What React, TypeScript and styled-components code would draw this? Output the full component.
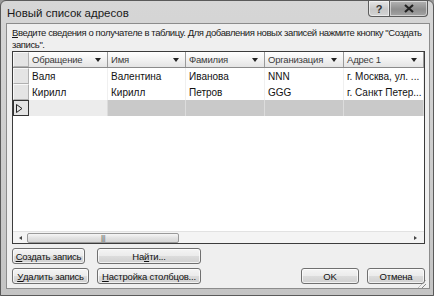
import React from 'react';
import styled, { createGlobalStyle } from 'styled-components';

const GlobalStyle = createGlobalStyle`
  html, body {
    margin: 0;
    padding: 0;
    width: 434px;
    height: 296px;
    overflow: hidden;
    background: #9a9a9a;
  }
  * {
    box-sizing: border-box;
  }
`;

const font = `"Liberation Sans", Arial, sans-serif`;

const Window = styled.div`
  width: 434px;
  height: 296px;
  display: flex;
  flex-direction: column;
  padding: 0 6px 6px 5px;
  background: linear-gradient(180deg, #d6d6d6 0%, #cfcfcf 40%, #c4c4c4 100%);
  border: 1px solid #5a5a5a;
  border-radius: 6px 6px 0 0;
  font-family: ${font};
  color: #111;
`;

const TitleBar = styled.div`
  height: 22px;
  display: flex;
  align-items: flex-start;
  justify-content: space-between;
  flex-shrink: 0;
`;

const Title = styled.div`
  font-size: 11.5px;
  padding: 6px 0 0 1px;
  color: #1a1a1a;
`;

const Controls = styled.div`
  display: flex;
  margin-right: -1px;
`;

const CtrlButton = styled.div<{ $w: number; $dark?: boolean }>`
  width: ${p => p.$w}px;
  height: 16px;
  display: flex;
  align-items: center;
  justify-content: center;
  border: 1px solid #5c5c5c;
  border-top: none;
  margin-left: -1px;
  background: ${p =>
    p.$dark
      ? 'linear-gradient(180deg, #b4b4b4 0%, #8e8e8e 55%, #a4a4a4 100%)'
      : 'linear-gradient(180deg, #e6e6e6 0%, #c8c8c8 55%, #d4d4d4 100%)'};
  border-radius: ${p => (p.$dark ? '0 0 4px 0' : '0 0 0 4px')};
  box-shadow: inset 0 0 0 1px rgba(255, 255, 255, 0.5);
  font-size: 11px;
  font-weight: bold;
  color: #333;
`;

const Client = styled.div`
  flex: 1;
  display: flex;
  flex-direction: column;
  background: #efefef;
  border: 1px solid #8c8c8c;
  padding: 3px 4px 0 5px;
`;

const Intro = styled.div`
  font-size: 9.5px;
  line-height: 11.5px;
  letter-spacing: -0.4px;
  color: #1a1a1a;
  height: 22px;
  white-space: pre;
  overflow: hidden;
`;

const U = styled.span`
  text-decoration: underline;
`;

const Grid = styled.div`
  margin-top: 2px;
  height: 193px;
  width: 413px;
  display: flex;
  flex-direction: column;
  background: #fff;
  border: 1px solid #3c3c3c;
`;

const Row = styled.div`
  display: grid;
  grid-template-columns: 16px 79px 78px 79px 79px 80px;
  height: 16px;
`;

const HeaderRow = styled(Row)`
  height: 16px;
  border-bottom: 1px solid #8a8a8a;
  background: linear-gradient(180deg, #ffffff 0%, #f2f2f2 50%, #e4e4e4 100%);
`;

const HeadCell = styled.div`
  display: flex;
  align-items: center;
  justify-content: space-between;
  padding: 0 6px 0 3px;
  font-size: 9.5px;
  letter-spacing: -0.2px;
  color: #3a3a3a;
  border-right: 1px solid #9a9a9a;
  white-space: nowrap;
  overflow: hidden;
`;

const Arrow = styled.span`
  width: 0;
  height: 0;
  border-left: 3px solid transparent;
  border-right: 3px solid transparent;
  border-top: 4px solid #222;
`;

const RowHead = styled.div<{ $current?: boolean }>`
  background: #e4e4e4;
  border: 1px solid ${p => (p.$current ? '#333' : '#b0b0b0')};
  border-top-color: ${p => (p.$current ? '#333' : '#f8f8f8')};
  border-left-color: ${p => (p.$current ? '#333' : '#f8f8f8')};
  display: flex;
  align-items: center;
  padding-left: 2px;
`;

const Cell = styled.div<{ $shade?: 'light' | 'dark' }>`
  display: flex;
  align-items: center;
  padding-left: 3px;
  font-size: 10px;
  color: #111;
  white-space: nowrap;
  overflow: hidden;
  background: ${p =>
    p.$shade === 'dark' ? '#c9c9c9' : p.$shade === 'light' ? '#ececec' : '#fff'};
  border-right: 1px solid ${p => (p.$shade ? '#dcdcdc' : '#f0f0f0')};
`;

const GridBody = styled.div`
  flex: 1;
`;

const ScrollBar = styled.div`
  height: 12px;
  display: flex;
  align-items: center;
  background: #f4f4f4;
  border-top: 1px solid #e2e2e2;
  padding: 0 2px 0 1px;
`;

const ScrollArrow = styled.div<{ $dir: 'left' | 'right' }>`
  width: 13px;
  display: flex;
  align-items: center;
  justify-content: center;
  &::after {
    content: '';
    border-top: 2.5px solid transparent;
    border-bottom: 2.5px solid transparent;
    ${p =>
      p.$dir === 'left'
        ? 'border-right: 3px solid #444;'
        : 'border-left: 3px solid #444;'}
  }
`;

const Thumb = styled.div`
  width: 152px;
  height: 10px;
  border: 1px solid #9a9a9a;
  border-radius: 2px;
  background: linear-gradient(180deg, #f6f6f6 0%, #e2e2e2 50%, #d6d6d6 100%);
  display: flex;
  align-items: center;
  justify-content: center;
  font-size: 7px;
  color: #555;
  letter-spacing: -0.5px;
`;

const Spacer = styled.div`
  flex: 1;
`;

const Footer = styled.div`
  display: flex;
  flex-direction: column;
  gap: 4px;
  padding: 4px 0 0 0;
  width: 413px;
`;

const ButtonRow = styled.div`
  display: flex;
  align-items: center;
`;

const Button = styled.div<{ $w: number; $gap?: number }>`
  width: ${p => p.$w}px;
  height: 16px;
  margin-left: ${p => p.$gap ?? 0}px;
  border: 1px solid #707070;
  border-radius: 3px;
  background: linear-gradient(180deg, #f4f4f4 0%, #ebebeb 50%, #dcdcdc 51%, #d0d0d0 100%);
  box-shadow: inset 0 0 0 1px rgba(255, 255, 255, 0.7);
  display: flex;
  align-items: center;
  justify-content: center;
  font-size: 9.5px;
  letter-spacing: -0.2px;
  color: #111;
  white-space: nowrap;
`;

const Grip = styled.div`
  position: absolute;
  right: 1px;
  bottom: 1px;
  width: 8px;
  height: 8px;
  background: repeating-linear-gradient(135deg, transparent 0 2px, #888 2px 3px);
  clip-path: polygon(100% 0, 100% 100%, 0 100%);
`;

const ClientWrap = styled.div`
  position: relative;
  flex: 1;
  display: flex;
`;

const columns = ['Обращение', 'Имя', 'Фамилия', 'Организация', 'Адрес 1'];

const rows = [
  ['Валя', 'Валентина', 'Иванова', 'NNN', 'г. Москва, ул. ...'],
  ['Кирилл', 'Кирилл', 'Петров', 'GGG', 'г. Санкт Петер...'],
];

const App: React.FC = () => {
  return (
    <>
      <GlobalStyle />
      <Window>
        <TitleBar>
          <Title>Новый список адресов</Title>
          <Controls>
            <CtrlButton $w={22}>?</CtrlButton>
            <CtrlButton $w={39} $dark>
              <svg width="10" height="9" viewBox="0 0 10 9">
                <path d="M1 1 L9 8 M9 1 L1 8" stroke="#222" strokeWidth="2.2" />
              </svg>
            </CtrlButton>
          </Controls>
        </TitleBar>
        <ClientWrap>
          <Client>
            <Intro>
              <U>В</U>ведите сведения о получателе в таблицу. Для добавления новых записей нажмите кнопку "Создать{'\n'}запись".
            </Intro>
            <Grid>
              <HeaderRow>
                <RowHead />
                {columns.map(c => (
                  <HeadCell key={c}>
                    {c}
                    <Arrow />
                  </HeadCell>
                ))}
              </HeaderRow>
              {rows.map((r, i) => (
                <Row key={i}>
                  <RowHead />
                  {r.map((v, j) => (
                    <Cell key={j}>{v}</Cell>
                  ))}
                </Row>
              ))}
              <Row>
                <RowHead $current>
                  <svg width="7" height="9" viewBox="0 0 7 9">
                    <path d="M0.5 0.5 L6 4.5 L0.5 8.5 Z" fill="none" stroke="#222" strokeWidth="1" />
                  </svg>
                </RowHead>
                <Cell $shade="light" />
                <Cell $shade="dark" />
                <Cell $shade="dark" />
                <Cell $shade="dark" />
                <Cell $shade="dark" />
              </Row>
              <GridBody />
              <ScrollBar>
                <ScrollArrow $dir="left" />
                <Thumb>|||</Thumb>
                <Spacer />
                <ScrollArrow $dir="right" />
              </ScrollBar>
            </Grid>
            <Footer>
              <ButtonRow>
                <Button $w={73}>
                  <U>С</U>оздать запись
                </Button>
                <Button $w={104} $gap={12}>
                  На<U>й</U>ти...
                </Button>
              </ButtonRow>
              <ButtonRow>
                <Button $w={77}>
                  <U>У</U>далить запись
                </Button>
                <Button $w={104} $gap={8}>
                  <U>Н</U>астройка столбцов...
                </Button>
                <Spacer />
                <Button $w={58}>OK</Button>
                <Button $w={58} $gap={8}>
                  Отмена
                </Button>
              </ButtonRow>
            </Footer>
          </Client>
          <Grip />
        </ClientWrap>
      </Window>
    </>
  );
};

export default App;
